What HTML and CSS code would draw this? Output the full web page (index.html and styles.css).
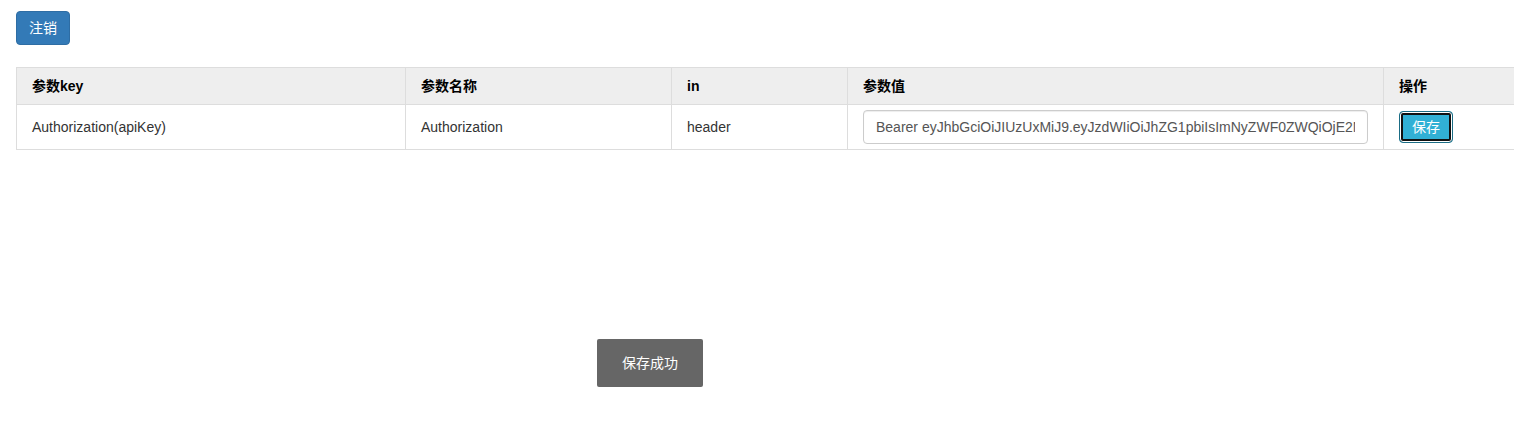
FILE: index.html
```html
<!DOCTYPE html>
<html>
<head>
<meta charset="utf-8">
<link rel="stylesheet" href="styles.css">
</head>
<body>
<div class="page">
  <button class="btn btn-primary">注销</button>
  <div class="table-wrap">
    <table class="params">
      <colgroup>
        <col class="c1"><col class="c2"><col class="c3"><col class="c4"><col class="c5">
      </colgroup>
      <thead>
        <tr><th>参数key</th><th>参数名称</th><th>in</th><th>参数值</th><th>操作</th></tr>
      </thead>
      <tbody>
        <tr>
          <td>Authorization(apiKey)</td>
          <td>Authorization</td>
          <td>header</td>
          <td><input class="form-control" type="text" value="Bearer eyJhbGciOiJIUzUxMiJ9.eyJzdWIiOiJhZG1pbiIsImNyZWF0ZWQiOjE2NjQ1MjM0MDAwMDB9"></td>
          <td><button class="btn btn-info focused">保存</button></td>
        </tr>
      </tbody>
    </table>
  </div>
</div>
<div class="toast">保存成功</div>
</body>
</html>
```

FILE: styles.css
```css
html, body {
  margin: 0;
  padding: 0;
  background: #fff;
}
body {
  font-family: "Liberation Sans", Arial, "Noto Sans CJK SC", sans-serif;
  font-size: 14px;
  line-height: 20px;
  color: #333;
}
.page {
  padding: 11px 0 0 16px;
  overflow: hidden;
}
.btn {
  display: inline-block;
  font-family: inherit;
  font-size: 14px;
  line-height: 20px;
  padding: 6px 12px;
  border: 1px solid transparent;
  border-radius: 4px;
  color: #fff;
  cursor: pointer;
}
.btn-primary {
  background: #337ab7;
  border-color: #2e6da4;
  margin-bottom: 22px;
  display: block;
}
.table-wrap {
  width: 1500px;
}
.params {
  width: 1500px;
  border-collapse: collapse;
  table-layout: fixed;
}
.c1 { width: 389px; }
.c2 { width: 266px; }
.c3 { width: 176px; }
.c4 { width: 536px; }
.c5 { width: 133px; }
.params th, .params td {
  border: 1px solid #ddd;
  text-align: left;
  vertical-align: middle;
}
.params th {
  background: #eee;
  font-weight: bold;
  color: #000;
  padding: 8px 15px;
}
.params td {
  padding: 5px 15px;
  color: #333;
}
.form-control {
  box-sizing: border-box;
  display: block;
  width: 100%;
  height: 34px;
  padding: 6px 12px;
  font-family: inherit;
  font-size: 14px;
  line-height: 20px;
  color: #555;
  background: #fff;
  border: 1px solid #ccc;
  border-radius: 4px;
  box-shadow: inset 0 1px 1px rgba(0,0,0,.075);
}
.btn-info {
  padding: 5px 12px;
  background: #31b0d5;
  border-color: #1b6d85;
  box-shadow: inset 0 0 0 1px #fff, inset 0 0 0 3px #111;
}
.toast {
  position: absolute;
  left: 597px;
  top: 339px;
  width: 106px;
  height: 48px;
  box-sizing: border-box;
  background: #666;
  color: #fff;
  border-radius: 2px;
  display: flex;
  align-items: center;
  justify-content: center;
  font-size: 14px;
}
```
